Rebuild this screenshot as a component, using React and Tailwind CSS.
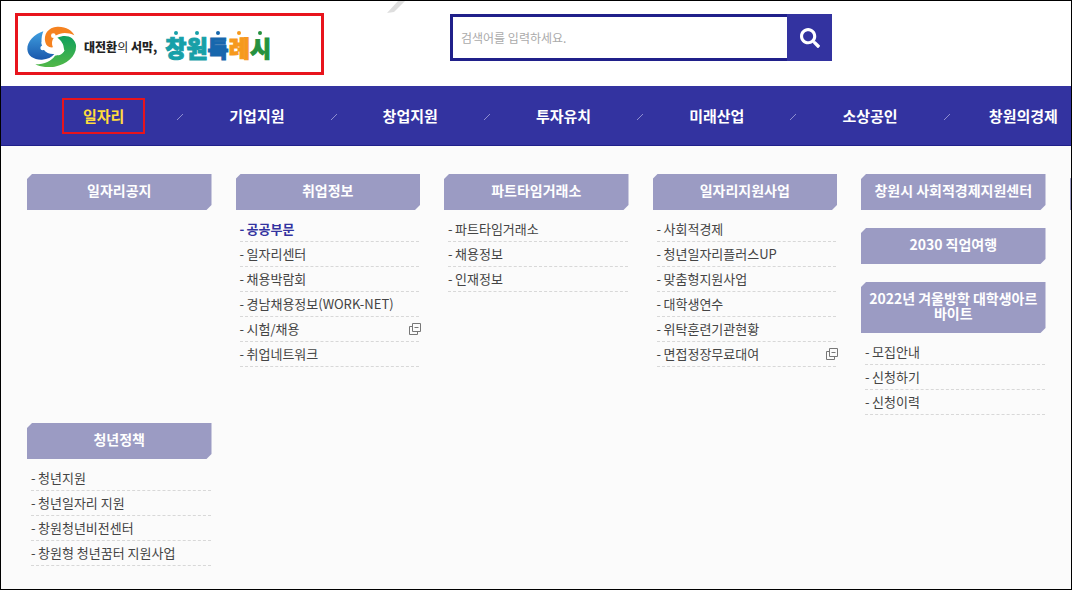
import { FaSearch } from "react-icons/fa";

const menus = ["일자리", "기업지원", "창업지원", "투자유치", "미래산업", "소상공인", "창원의경제"];

const columns = [
  [{ title: "일자리공지" }],
  [
    {
      title: "취업정보",
      items: [
        { label: "공공부문", active: true },
        { label: "일자리센터" },
        { label: "채용박람회" },
        { label: "경남채용정보(WORK-NET)" },
        { label: "시험/채용", external: true },
        { label: "취업네트워크" },
      ],
    },
  ],
  [
    {
      title: "파트타임거래소",
      items: [{ label: "파트타임거래소" }, { label: "채용정보" }, { label: "인재정보" }],
    },
  ],
  [
    {
      title: "일자리지원사업",
      items: [
        { label: "사회적경제" },
        { label: "청년일자리플러스UP" },
        { label: "맞춤형지원사업" },
        { label: "대학생연수" },
        { label: "위탁훈련기관현황" },
        { label: "면접정장무료대여", external: true },
      ],
    },
  ],
  [
    { title: "창원시 사회적경제지원센터" },
    { title: "2030 직업여행" },
    {
      title: "2022년 겨울방학 대학생아르바이트",
      items: [{ label: "모집안내" }, { label: "신청하기" }, { label: "신청이력" }],
    },
  ],
  // runs off the right edge of the panel
  [{ title: "" }],
  [
    {
      title: "청년정책",
      items: [
        { label: "청년지원" },
        { label: "청년일자리 지원" },
        { label: "창원청년비전센터" },
        { label: "창원형 청년꿈터 지원사업" },
      ],
    },
  ],
];

function CityMark() {
  return (
    <svg className="w-[50px] h-[42px] shrink-0" viewBox="15 10 150 126" aria-hidden="true">
      <defs>
        <linearGradient id="markBlue" x1="0" y1="0" x2="0" y2="1">
          <stop offset="0" stopColor="#3f9fe0" />
          <stop offset="1" stopColor="#1a58ac" />
        </linearGradient>
        <linearGradient id="markGreen" x1="0" y1="0" x2="0" y2="1">
          <stop offset="0" stopColor="#10a05c" />
          <stop offset="1" stopColor="#52b848" />
        </linearGradient>
      </defs>
      <path
        fill="url(#markBlue)"
        d="M64 29C38 36 15 60 16 83C17 104 37 115 60 114C77 113 89 107 97 97C83 98 73 94 66 85C57 72 56 49 64 29Z"
      />
      <path
        fill="#f58220"
        d="M70 62C64 38 78 17 106 15C132 14 150 25 157 41C138 32 116 32 102 42C90 51 87 64 93 77C81 79 73 73 70 62Z"
      />
      <path
        fill="url(#markGreen)"
        d="M106 48C132 36 157 45 162 70C165 102 135 128 98 135C75 138 53 136 40 128C69 128 88 118 99 102C107 100 120 101 124 90C129 75 121 58 106 48Z"
      />
      <g fill="#fff">
        <circle cx="94" cy="42" r="7" />
        <path d="M95 42l16-2-12 12z" />
        <circle cx="120" cy="86" r="7" />
        <path d="M119 84l-12 16-6-8z" />
        <circle cx="62" cy="79" r="7" />
        <path d="M60 74l-2-14 8 10z" />
      </g>
    </svg>
  );
}

function ExternalIcon() {
  return (
    <svg
      className="w-3 h-3 -mr-0.5 shrink-0"
      viewBox="0 0 12 12"
      fill="none"
      stroke="#777"
      role="img"
      aria-label="새창"
    >
      <path d="M3.5 .5h8v8h-8zM5.5 4.5h4M3 3.5H.5v8h8V9" />
    </svg>
  );
}

function Letter({ className, children }) {
  return (
    <span className={`relative ${className}`}>
      {children}
      <i className="absolute left-1/2 -top-0.5 w-1 h-1 -ml-0.5 rounded-full bg-current" />
    </span>
  );
}

function Header() {
  return (
    <header className="relative flex items-start h-[85px] pt-3 px-[14px] bg-white">
      <a
        href="#"
        className="flex items-center w-[309px] h-[62px] pl-[9px] pt-1 border-3 border-[#e8141c]"
      >
        <CityMark />
        <span className="ml-[7px] pt-0.5 text-[12px] leading-4 font-black text-[#222] whitespace-nowrap">
          대전환<span className="font-normal">의</span> 서막,
        </span>
        <span className="flex ml-2 pt-0.5 text-[23px] leading-7 font-black [-webkit-text-stroke:1px_currentColor]">
          <Letter className="text-[#17a0a8]">창</Letter>
          <Letter className="text-[#17a0a8]">원</Letter>
          <Letter className="text-[#1767ad]">특</Letter>
          <Letter className="text-[#f6991d]">례</Letter>
          <Letter className="text-[#25913f]">시</Letter>
        </span>
      </a>

      <svg
        className="absolute left-[385px] top-0 w-5 h-3"
        viewBox="0 0 20 12"
        fill="#dedede"
        aria-hidden="true"
      >
        <path d="M12 0h7L8 11l-7 1z" />
      </svg>

      <form className="flex w-[382px] h-[47px] mt-px ml-[126px]">
        <input
          type="text"
          aria-label="검색어"
          placeholder="검색어를 입력하세요."
          className="flex-1 min-w-0 px-2 bg-white border-3 border-r-0 border-[#20208a] text-[12px] text-[#333] placeholder:text-[#aaa] outline-none"
        />
        <button
          type="button"
          aria-label="검색"
          className="flex items-center justify-center w-[45px] bg-[#3333a0] text-white"
        >
          <FaSearch className="w-5 h-5" />
        </button>
      </form>
    </header>
  );
}

function Navbar() {
  return (
    <nav className="overflow-hidden bg-[#3333a0] border-b border-[#20208a]">
      <ul className="grid grid-cols-7 ml-[26px] mr-[-29px]">
        {menus.map((menu, i) => (
          <li key={menu} className="relative flex items-center justify-center h-[59px]">
            <a
              href="#"
              className={
                i === 0
                  ? "px-[19px] py-1 border-2 border-[#e8141c] text-[15px] leading-6 font-bold text-[#ffdc3c]"
                  : "text-[15px] leading-6 font-bold text-white"
              }
            >
              {menu}
            </a>
            {i < menus.length - 1 && (
              <svg
                className="absolute -right-1 top-[27px] w-2 h-2"
                viewBox="0 0 8 8"
                stroke="#8f8fd0"
                aria-hidden="true"
              >
                <path d="M1 7l6-6" />
              </svg>
            )}
          </li>
        ))}
      </ul>
    </nav>
  );
}

function Group({ title, items }) {
  return (
    <section>
      <h2 className="min-h-9 pt-[9px] pb-3 px-1 bg-[#9b9bc3] text-center text-[14px] leading-[15px] font-bold text-white break-all [clip-path:polygon(5px_0,100%_0,100%_calc(100%-5px),calc(100%-5px)_100%,0_100%,0_5px)]">
        {title}
      </h2>
      {items && (
        <ul className="mt-[7px] ml-1 mr-px">
          {items.map((item) => (
            <li key={item.label} className="border-b border-dashed border-[#d8d8d8]">
              <a
                href="#"
                className={
                  item.active
                    ? "flex items-center h-6 text-[13px] font-bold text-[#3333a0]"
                    : "flex items-center h-6 text-[13px] text-[#444]"
                }
              >
                <span className="w-[7px]">-</span>
                <span className="flex-1 whitespace-nowrap">{item.label}</span>
                {item.external && <ExternalIcon />}
              </a>
            </li>
          ))}
        </ul>
      )}
    </section>
  );
}

function App() {
  return (
    <div className="min-h-screen overflow-hidden border border-black bg-[#fbfbfb] font-['Noto_Sans_CJK_KR',sans-serif]">
      <Header />
      <Navbar />
      <main className="grid grid-cols-6 gap-x-6 gap-y-2 pt-7 ml-[26px] mr-[-183px]">
        {columns.map((groups, i) => (
          <div key={i} className="flex flex-col gap-[18px]">
            {groups.map((group) => (
              <Group key={group.title} {...group} />
            ))}
          </div>
        ))}
      </main>
    </div>
  );
}

export default App;
